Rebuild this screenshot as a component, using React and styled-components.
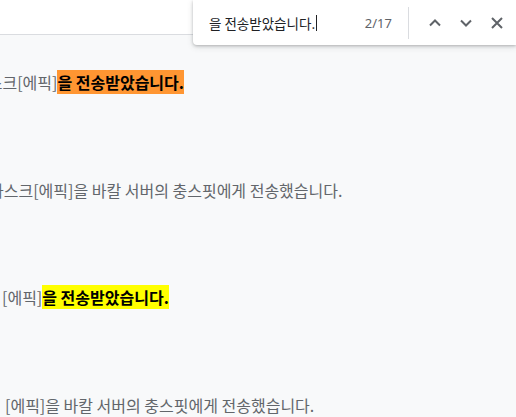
import React from "react";
import styled, { createGlobalStyle } from "styled-components";

const Global = createGlobalStyle`
  html, body { margin: 0; padding: 0; }
  body {
    background: #f8f9fa;
    font-family: "Noto Sans CJK KR", "Noto Sans", sans-serif;
    overflow: hidden;
  }
`;

const Page = styled.div`
  position: relative;
  width: 516px;
  height: 417px;
  overflow: hidden;
  background: #f8f9fa;
`;

const Header = styled.div`
  height: 34px;
  background: #ffffff;
  border-bottom: 1px solid #dadce0;
`;

const Log = styled.div`
  display: flex;
  flex-direction: column;
  padding-top: 35px;
`;

const Row = styled.div`
  height: 107.5px;
  overflow: hidden;
  white-space: nowrap;
`;

const Line = styled.div`
  font-size: 16px;
  line-height: 24px;
  color: #62666b;
  margin-left: ${(p) => p.$shift}px;
`;

const Mark = styled.span`
  background: ${(p) => (p.$current ? "#ff9632" : "#ffff00")};
  color: #000000;
  font-weight: 700;
`;

const FindBar = styled.div`
  position: absolute;
  top: 0;
  right: 0;
  width: 323px;
  height: 45px;
  background: #ffffff;
  border-bottom-left-radius: 4px;
  box-shadow: 0 1px 3px rgba(60, 64, 67, 0.3), 0 2px 6px rgba(60, 64, 67, 0.15);
  display: flex;
  align-items: center;
  box-sizing: border-box;
  padding-left: 16px;
  padding-right: 4px;
`;

const Query = styled.div`
  flex: 1;
  font-size: 13.5px;
  color: #202124;
  display: flex;
  align-items: center;
`;

const Caret = styled.span`
  display: inline-block;
  width: 1px;
  height: 16px;
  background: #202124;
  margin-left: 1px;
`;

const Count = styled.div`
  font-size: 13px;
  color: #5f6368;
  font-family: "Noto Sans", sans-serif;
  margin-right: 16px;
`;

const Divider = styled.div`
  width: 1px;
  height: 32px;
  background: #dadce0;
  margin-right: 10px;
`;

const IconButton = styled.button`
  width: 31px;
  height: 32px;
  border: none;
  background: transparent;
  padding: 0;
  display: flex;
  align-items: center;
  justify-content: center;
  color: #5f6368;
`;

const Chevron = ({ up }) => (
  <svg width="12" height="8" viewBox="0 0 12 8">
    <path
      d={up ? "M1 6.5 L6 1.5 L11 6.5" : "M1 1.5 L6 6.5 L11 1.5"}
      fill="none"
      stroke="#5f6368"
      strokeWidth="2"
    />
  </svg>
);

const Close = () => (
  <svg width="12" height="12" viewBox="0 0 12 12">
    <path d="M1 1 L11 11 M11 1 L1 11" stroke="#5f6368" strokeWidth="2" />
  </svg>
);

const lines = [
  { shift: -27, pre: "마스크[에픽]", hit: "을 전송받았습니다.", current: true },
  { shift: -11, pre: "마스크[에픽]을 바칼 서버의 충스핏에게 전송했습니다." },
  { shift: 2, pre: "[에픽]", hit: "을 전송받았습니다." },
  { shift: 5, pre: "[에픽]을 바칼 서버의 충스핏에게 전송했습니다." },
];

export default function App() {
  return (
    <Page>
      <Global />
      <Header />
      <Log>
        {lines.map((l, i) => (
          <Row key={i}>
            <Line $shift={l.shift}>
              {l.pre}
              {l.hit && <Mark $current={l.current}>{l.hit}</Mark>}
            </Line>
          </Row>
        ))}
      </Log>
      <FindBar>
        <Query>
          을 전송받았습니다.
          <Caret />
        </Query>
        <Count>2/17</Count>
        <Divider />
        <IconButton aria-label="이전">
          <Chevron up />
        </IconButton>
        <IconButton aria-label="다음">
          <Chevron />
        </IconButton>
        <IconButton aria-label="닫기">
          <Close />
        </IconButton>
      </FindBar>
    </Page>
  );
}
